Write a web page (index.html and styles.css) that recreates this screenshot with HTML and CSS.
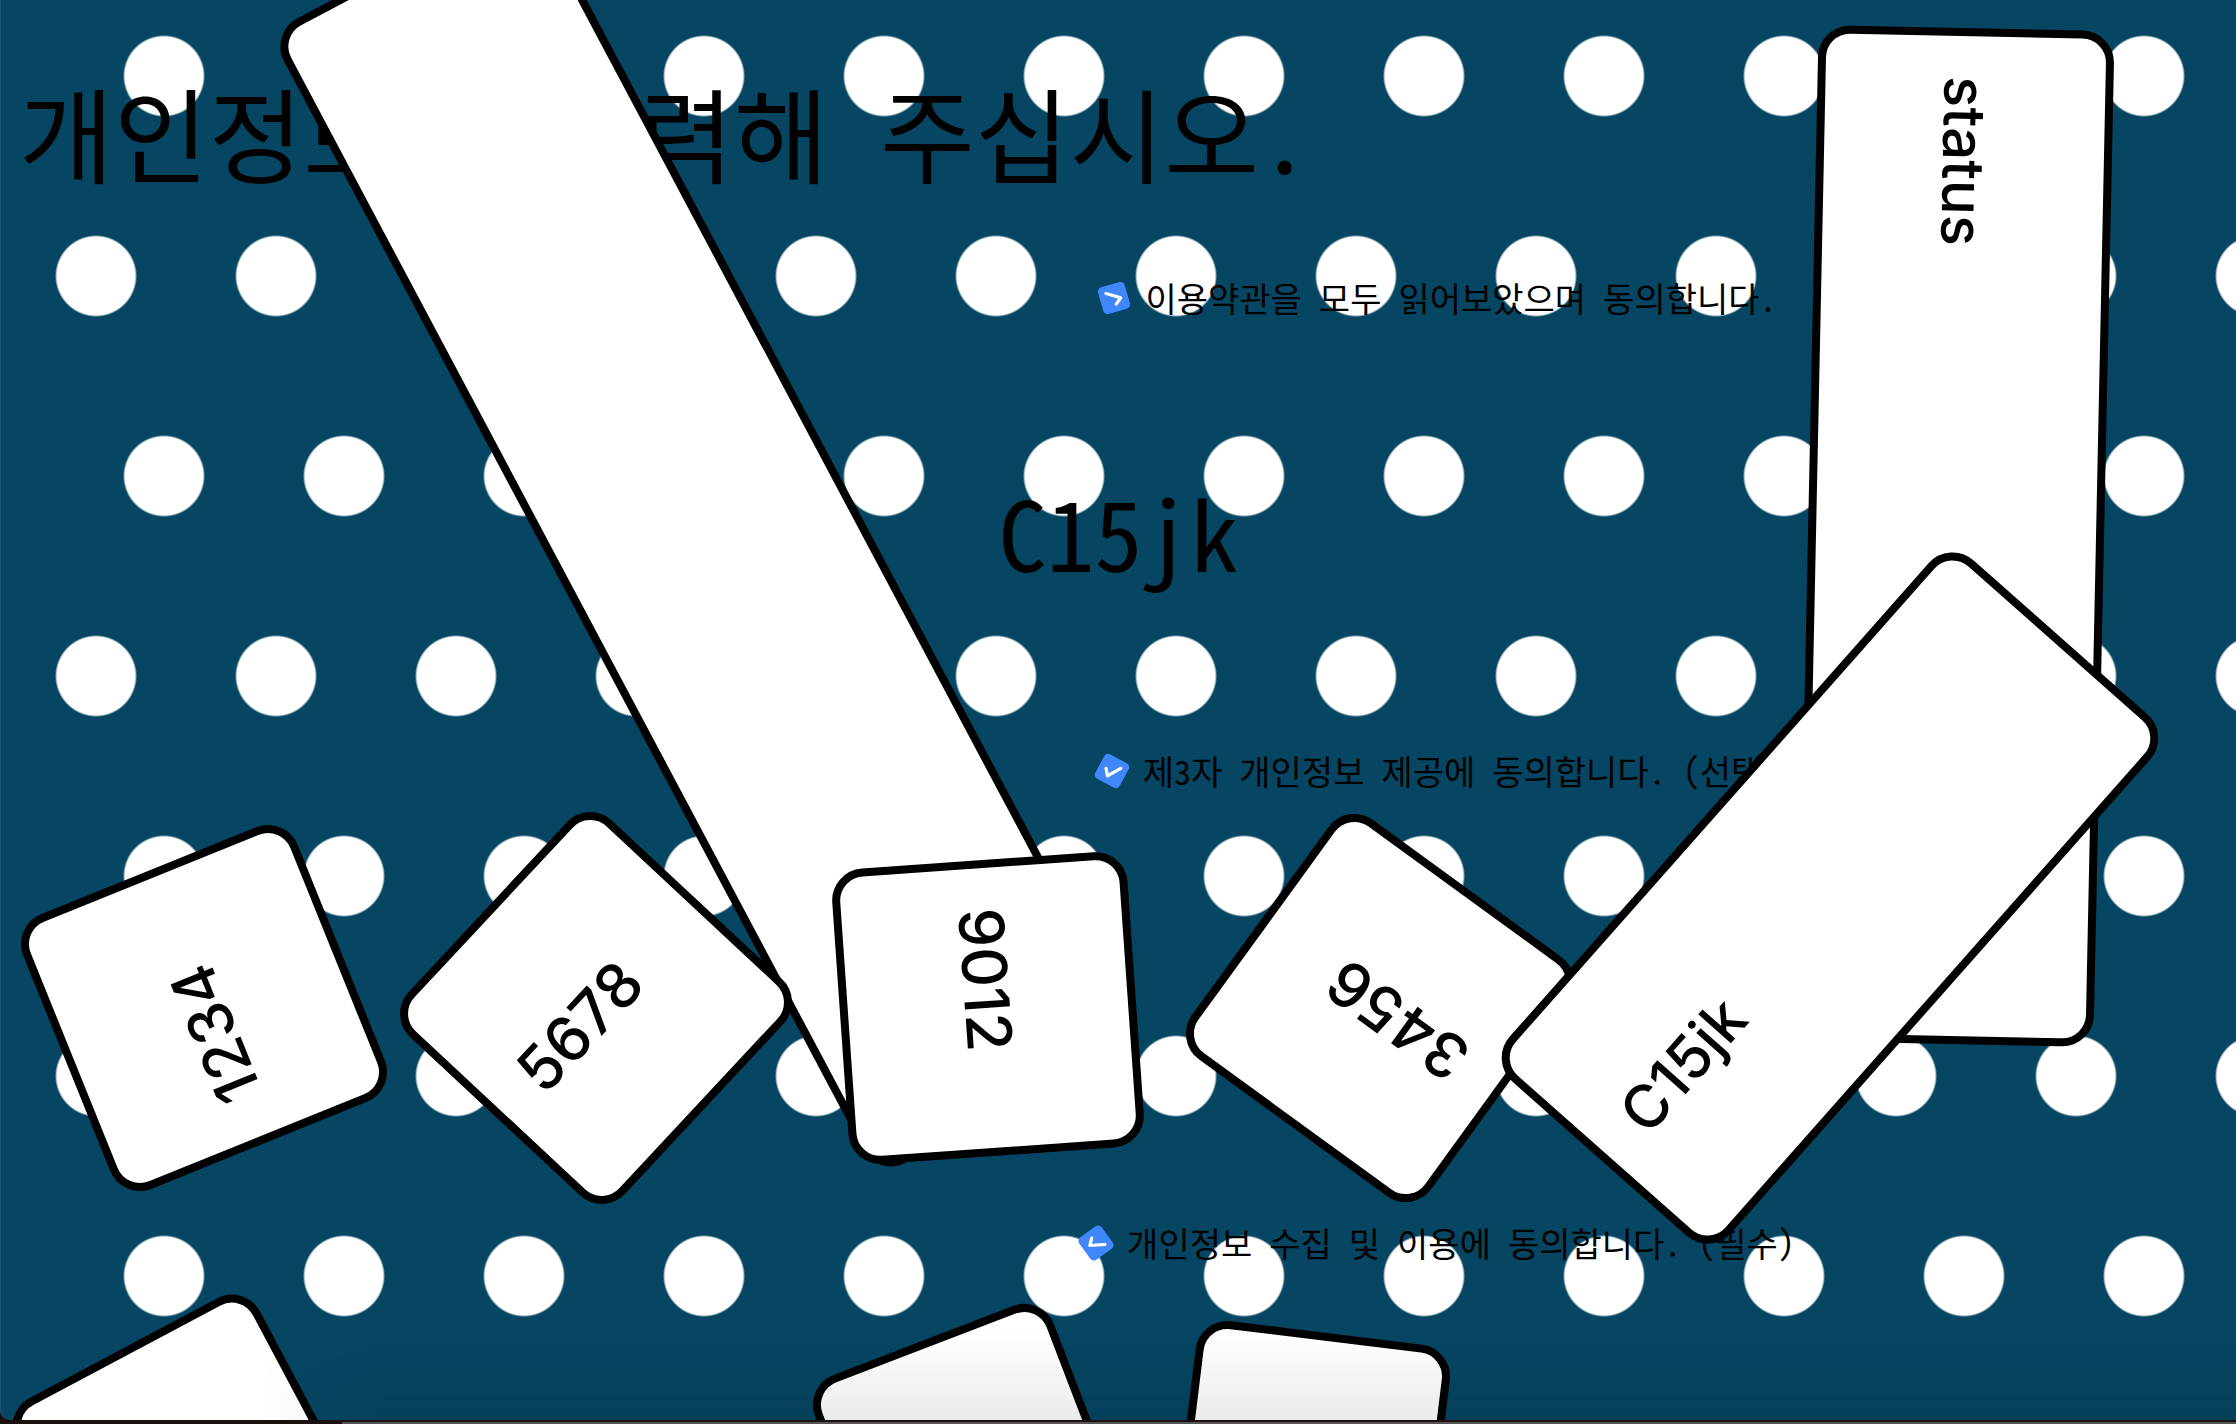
FILE: index.html
```html
<!DOCTYPE html>
<html lang="ko">
<head>
<meta charset="utf-8">
<meta name="viewport" content="width=device-width, initial-scale=1">
<title>개인정보를 입력해 주십시오.</title>
<link rel="stylesheet" href="styles.css">
</head>
<body>
<form class="window">
  <h1 class="title">개인정보를 입력해 주십시오.</h1>
  <div class="consent consent-terms">
    <input class="tick" type="checkbox" id="terms" checked>
    <label for="terms">이용약관을 모두 읽어보았으며 동의합니다.</label>
  </div>
  <p class="captcha">C15jk</p>
  <div class="consent consent-share">
    <input class="tick" type="checkbox" id="share" checked>
    <label for="share">제3자 개인정보 제공에 동의합니다. (선택)</label>
  </div>
  <div class="consent consent-collect">
    <input class="tick" type="checkbox" id="collect" checked>
    <label for="collect">개인정보 수집 및 이용에 동의합니다. (필수)</label>
  </div>

  <div class="scatter">
    <input class="field name" type="text" aria-label="이름">
    <input class="field state" type="text" aria-label="상태" value="status">
    <input class="field card card-1" type="text" aria-label="카드 번호 1" value="1234">
    <input class="field card card-2" type="text" aria-label="카드 번호 2" value="5678">
    <input class="field card card-3" type="text" aria-label="카드 번호 3" value="9012">
    <input class="field card card-4" type="text" aria-label="카드 번호 4" value="3456">
    <input class="field code" type="text" aria-label="보안 문자" value="C15jk">
    <input class="field pin pin-1" type="text" aria-label="비밀번호 1">
    <input class="field pin pin-2" type="text" aria-label="비밀번호 2">
    <input class="field pin pin-3" type="text" aria-label="비밀번호 3">
  </div>
</form>
<div class="dock"></div>
</body>
</html>
```
FILE: styles.css
```css
* {
  box-sizing: border-box;
}

body {
  margin: 0;
  height: 100vh;
  display: flex;
  flex-direction: column;
  overflow: hidden;
  background: #1c1011;
  color: #000;
  font-family: "Noto Sans Mono CJK KR", "Noto Sans CJK KR", monospace;
}

/* Window with the polka-dot backdrop; the dots start clear of the left edge */
.window {
  position: relative;
  flex: 1;
  min-height: 0;
  padding-top: 60px;
  overflow: hidden;
  border-left: 1px solid #1f5874;
  border-bottom-left-radius: 10px;
  background-color: #064663;
  background-image:
    linear-gradient(#064663, #064663),
    radial-gradient(circle at 90px 200px, #fff 39px, transparent 41px),
    radial-gradient(circle at 90px 200px, #fff 39px, transparent 41px);
  background-size: 40px 100%, 180px 400px, 180px 400px;
  background-position: 0 0, 73px -124px, 5px 76px;
  background-repeat: no-repeat, repeat, repeat;
}

/* Shade cast by the dock */
.window::after {
  content: "";
  position: absolute;
  left: 260px;
  right: 0;
  bottom: 0;
  height: 88px;
  background: linear-gradient(transparent, rgba(0, 0, 0, 0.08));
  -webkit-mask-image: linear-gradient(90deg, transparent, #000 120px);
  mask-image: linear-gradient(90deg, transparent, #000 120px);
  pointer-events: none;
}

.dock {
  height: 4px;
  margin-left: 342px;
  border-top: 2px solid #1c1011;
  background: #555;
}

.title {
  margin: 0 0 70px 18px;
  font-size: 103px;
  line-height: 144px;
  font-weight: 400;
  white-space: nowrap;
}

.consent {
  display: flex;
  justify-content: center;
  align-items: center;
  gap: 17px;
  height: 48px;
  margin-left: 640px;
  font-size: 34px;
  line-height: 48px;
  white-space: nowrap;
}

.captcha {
  margin: 149px 0 156px;
  font-size: 96px;
  line-height: 120px;
  text-align: center;
}

.consent-collect {
  margin-top: 424px;
}

.tick {
  appearance: none;
  flex: none;
  width: 28px;
  height: 28px;
  margin: 0;
  border-radius: 5px;
  background: #3f87fb url("data:image/svg+xml,%3Csvg xmlns='http://www.w3.org/2000/svg' viewBox='0 0 26 26'%3E%3Cpath d='M7 13.5l4.5 5.5L19 7' fill='none' stroke='%23fff' stroke-width='3' stroke-linecap='round' stroke-linejoin='round'/%3E%3C/svg%3E") center / 100% 100%;
}

.consent-terms .tick {
  transform: rotate(-106deg);
}

.consent-share .tick {
  transform: rotate(28deg);
}

.consent-collect .tick {
  transform: rotate(54deg);
}

/* Fields tumbling over the form */
.scatter {
  position: absolute;
  inset: 0;
}

.field {
  position: absolute;
  width: 296px;
  height: 296px;
  padding: 0 40px;
  border: 8px solid #000;
  border-radius: 32px;
  background: #fff;
  color: #000;
  font-family: Inter, "Noto Sans CJK KR", sans-serif;
  font-size: 60px;
  font-weight: 450;
  transform: translate(-50%, -50%) rotate(var(--turn));
}

.name {
  --turn: 62deg;
  left: 703px;
  top: 536px;
  width: 1296px;
}

.state {
  --turn: 91.2deg;
  left: 1955px;
  top: 536px;
  width: 1016px;
  font-size: 58px;
}

.card {
  top: 1008px;
  font-size: 62px;
}

.card-1 {
  --turn: -112deg;
  left: 203px;
}

.card-2 {
  --turn: -47deg;
  left: 595px;
}

.card-3 {
  --turn: 86deg;
  left: 987px;
}

.card-4 {
  --turn: -144deg;
  left: 1379px;
}

.code {
  --turn: -48.5deg;
  left: 1829px;
  top: 898px;
  width: 696px;
}

.pin {
  top: 1460px;
  width: 256px;
  height: 256px;
}

.pin-1 {
  --turn: -28deg;
  left: 187px;
  top: 1470px;
  width: 276px;
  height: 276px;
}

.pin-2 {
  --turn: -21deg;
  left: 968px;
}

.pin-3 {
  --turn: 7deg;
  left: 1310px;
}
```
